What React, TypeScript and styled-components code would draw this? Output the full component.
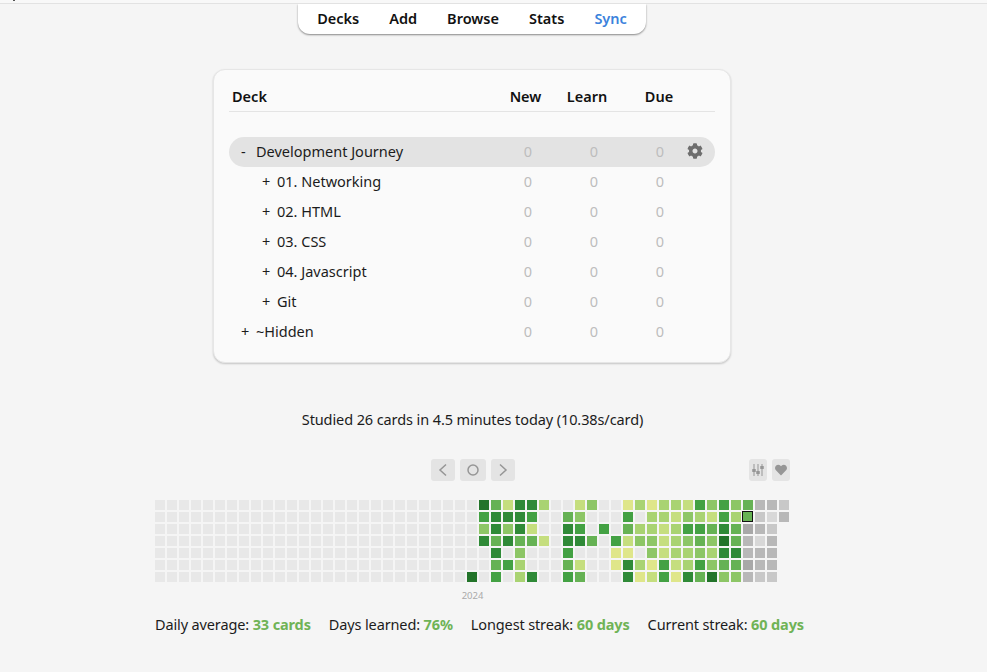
import React from 'react';
import styled, { createGlobalStyle } from 'styled-components';
import { FaCog, FaHeart } from 'react-icons/fa';

const GlobalStyle = createGlobalStyle`
  html, body {
    margin: 0;
    padding: 0;
    background: #f5f5f5;
    color: #1c1c1c;
    font-family: "Noto Sans", "Open Sans", sans-serif;
    font-size: 15px;
  }
`;

const TopStrip = styled.div`
  position: relative;
  height: 3px;
  background: #f8f8f8;
  border-bottom: 1px solid #e2e2e2;
`;

const Speck = styled.span`
  position: absolute;
  left: 13px;
  top: 0;
  width: 2px;
  height: 1px;
  background: #555;
`;

const Page = styled.div`
  width: 945px;
  display: flex;
  flex-direction: column;
  align-items: center;
`;

const Toolbar = styled.nav`
  box-sizing: border-box;
  display: flex;
  gap: 30px;
  height: 30px;
  align-items: center;
  padding: 0 19px 2px;
  margin-right: 1px;
  background: #ffffff;
  border-radius: 0 0 12px 12px;
  box-shadow: 0 1px 2px rgba(0, 0, 0, 0.45);
`;

const NavLink = styled.a<{ $accent?: boolean }>`
  font-size: 14.5px;
  font-weight: 600;
  color: ${p => (p.$accent ? '#3b82dc' : '#111')};
`;

const DeckCard = styled.section`
  box-sizing: border-box;
  width: 518px;
  height: 294px;
  margin: 35px 1px 0 0;
  padding: 13px 15px 0;
  background: #fafafa;
  border: 1px solid #e6e6e6;
  border-radius: 12px;
  box-shadow: 0 1px 2px rgba(0, 0, 0, 0.2);
`;

const HeaderRow = styled.div`
  box-sizing: border-box;
  display: grid;
  grid-template-columns: 262px 69px 54px 90px 1fr;
  align-items: center;
  height: 29px;
  padding-bottom: 2px;
  font-size: 14.5px;
  font-weight: 600;
  color: #111;
  border-bottom: 1px solid #e4e4e4;
  margin-bottom: 25px;
`;

const HeaderCell = styled.div<{ $left?: boolean }>`
  text-align: ${p => (p.$left ? 'left' : 'center')};
  padding-left: ${p => (p.$left ? '3px' : '0')};
`;

const DeckRow = styled.div<{ $current?: boolean }>`
  box-sizing: border-box;
  display: grid;
  grid-template-columns: 266px 66px 66px 66px 22px;
  align-items: center;
  height: 30px;
  padding-bottom: 2px;
  border-radius: 15px;
  background: ${p => (p.$current ? '#e3e3e3' : 'transparent')};
`;

const DeckName = styled.div<{ $depth: number }>`
  display: flex;
  align-items: center;
  padding-left: ${p => (p.$depth === 0 ? 12 : 33)}px;
  white-space: nowrap;
  font-size: 14.5px;
`;

const Toggle = styled.span`
  display: inline-block;
  width: 15px;
  flex: none;
`;

const Count = styled.div`
  text-align: center;
  font-size: 14.5px;
  color: #bdbdbd;
`;

const GearWrap = styled.div`
  display: flex;
  margin-left: -6px;
  color: #6e6e6e;
  font-size: 16px;
`;

const Studied = styled.p`
  margin: 46px 0 0;
  height: 20px;
  line-height: 20px;
  font-size: 14.5px;
  letter-spacing: -0.1px;
`;

const HeatSection = styled.section`
  width: 635px;
  margin-top: 30px;
`;

const Controls = styled.div`
  display: grid;
  grid-template-columns: 1fr auto 1fr;
  align-items: center;
  height: 22px;
  margin-bottom: 19px;
`;

const ButtonGroup = styled.div<{ $end?: boolean }>`
  display: flex;
  gap: 5px;
  grid-column: ${p => (p.$end ? 3 : 2)};
  justify-content: ${p => (p.$end ? 'flex-end' : 'center')};
  padding-left: ${p => (p.$end ? 0 : 1)}px;
`;

const IconButton = styled.div<{ $width?: number }>`
  display: flex;
  align-items: center;
  justify-content: center;
  width: ${p => p.$width ?? 24}px;
  height: 22px;
  background: #e4e4e4;
  border-radius: 3px;
  color: #969696;
`;

const HeatGrid = styled.div`
  display: grid;
  grid-auto-flow: column;
  grid-template-rows: repeat(7, 10px);
  grid-auto-columns: 10px;
  gap: 2px;
`;

const levelColors: Record<string, string> = {
  '.': '#e8e8e8',
  a: '#dfe68a',
  b: '#c5de7e',
  c: '#a9d372',
  d: '#8dc666',
  e: '#66b254',
  f: '#43a143',
  g: '#2f8a37',
  h: '#23742a',
  x: '#a8a8a8',
  y: '#b8b8b8',
  z: '#c8c8c8',
  w: '#d8d8d8',
};

const Cell = styled.div<{ $level: string; $today?: boolean }>`
  box-sizing: border-box;
  background: ${p => levelColors[p.$level] ?? 'transparent'};
  ${p => (p.$today ? 'border: 1px solid #111; margin: -1px 0 0 -1px;' : '')}
`;

const YearLabel = styled.div`
  margin-top: 8px;
  text-align: center;
  font-size: 9.5px;
  line-height: 12px;
  color: #aaa;
`;

const Summary = styled.div`
  display: flex;
  gap: 18px;
  margin-top: 12px;
  white-space: nowrap;
  font-size: 14.5px;
  letter-spacing: -0.13px;
  line-height: 20px;
`;

const Highlight = styled.b`
  font-weight: 700;
  color: #6fb356;
`;

type Deck = { name: string; toggle: string; depth: number; current?: boolean };

const decks: Deck[] = [
  { name: 'Development Journey', toggle: '-', depth: 0, current: true },
  { name: '01. Networking', toggle: '+', depth: 1 },
  { name: '02. HTML', toggle: '+', depth: 1 },
  { name: '03. CSS', toggle: '+', depth: 1 },
  { name: '04. Javascript', toggle: '+', depth: 1 },
  { name: 'Git', toggle: '+', depth: 1 },
  { name: '~Hidden', toggle: '+', depth: 0 },
];

// weeks 26..52, one string per weekday
const activity = [
  '.hebggc..bd..acaccbfdfdeyyz',
  '.fgggf..ed...f.ccbdcbfcezwy',
  '.dgdgb..gf.f.eccbcffegexyz ',
  '.gegeeb.gge.fbddbcdedheywy ',
  '..g.d...f...aa.dbccdcggyyy ',
  '..efc...eb..agcafbcfdeexyy ',
  'h.f.cg..fe...gabfagehddyzz ',
];

const WEEKS = 53;
const FIRST_ACTIVE_WEEK = 26;
const TODAY_WEEK = 49;
const TODAY_DAY = 1;

const Heatmap = () => {
  const cells = [];
  for (let w = 0; w < WEEKS; w++) {
    for (let d = 0; d < 7; d++) {
      const level = w < FIRST_ACTIVE_WEEK ? '.' : activity[d][w - FIRST_ACTIVE_WEEK];
      cells.push(<Cell key={`${w}-${d}`} $level={level} $today={w === TODAY_WEEK && d === TODAY_DAY} />);
    }
  }
  return <HeatGrid>{cells}</HeatGrid>;
};

const Chevron = ({ flip }: { flip?: boolean }) => (
  <svg width="10" height="14" viewBox="0 0 10 14" fill="none" stroke="currentColor" strokeWidth="1.5">
    <path d={flip ? 'M2 1.5 L8 7 L2 12.5' : 'M8 1.5 L2 7 L8 12.5'} />
  </svg>
);

const Sliders = () => (
  <svg width="12" height="14" viewBox="0 0 12 14" fill="currentColor" stroke="currentColor" strokeWidth="1">
    <path d="M2 1v12M6 1v12M10 1v12" fill="none" />
    <rect x="0.8" y="6.5" width="2.4" height="2" />
    <rect x="4.8" y="8.5" width="2.4" height="2" />
    <rect x="8.8" y="3.5" width="2.4" height="2" />
  </svg>
);

export default function App() {
  return (
    <>
      <GlobalStyle />
      <TopStrip>
        <Speck />
      </TopStrip>
      <Page>
        <Toolbar>
          <NavLink>Decks</NavLink>
          <NavLink>Add</NavLink>
          <NavLink>Browse</NavLink>
          <NavLink>Stats</NavLink>
          <NavLink $accent>Sync</NavLink>
        </Toolbar>

        <DeckCard>
          <HeaderRow>
            <HeaderCell $left>Deck</HeaderCell>
            <HeaderCell>New</HeaderCell>
            <HeaderCell>Learn</HeaderCell>
            <HeaderCell>Due</HeaderCell>
          </HeaderRow>
          {decks.map(deck => (
            <DeckRow key={deck.name} $current={deck.current}>
              <DeckName $depth={deck.depth}>
                <Toggle>{deck.toggle}</Toggle>
                {deck.name}
              </DeckName>
              <Count>0</Count>
              <Count>0</Count>
              <Count>0</Count>
              {deck.current && (
                <GearWrap>
                  <FaCog />
                </GearWrap>
              )}
            </DeckRow>
          ))}
        </DeckCard>

        <Studied>Studied 26 cards in 4.5 minutes today (10.38s/card)</Studied>

        <HeatSection>
          <Controls>
            <ButtonGroup>
              <IconButton>
                <Chevron />
              </IconButton>
              <IconButton $width={26}>
                <svg width="14" height="14" viewBox="0 0 14 14" fill="none" stroke="currentColor" strokeWidth="1.5">
                  <circle cx="7" cy="7" r="5" />
                </svg>
              </IconButton>
              <IconButton>
                <Chevron flip />
              </IconButton>
            </ButtonGroup>
            <ButtonGroup $end>
              <IconButton $width={18}>
                <Sliders />
              </IconButton>
              <IconButton $width={18}>
                <FaHeart size={12} />
              </IconButton>
            </ButtonGroup>
          </Controls>
          <Heatmap />
          <YearLabel>2024</YearLabel>
          <Summary>
            <span>
              Daily average: <Highlight>33 cards</Highlight>
            </span>
            <span>
              Days learned: <Highlight>76%</Highlight>
            </span>
            <span>
              Longest streak: <Highlight>60 days</Highlight>
            </span>
            <span>
              Current streak: <Highlight>60 days</Highlight>
            </span>
          </Summary>
        </HeatSection>
      </Page>
    </>
  );
}
